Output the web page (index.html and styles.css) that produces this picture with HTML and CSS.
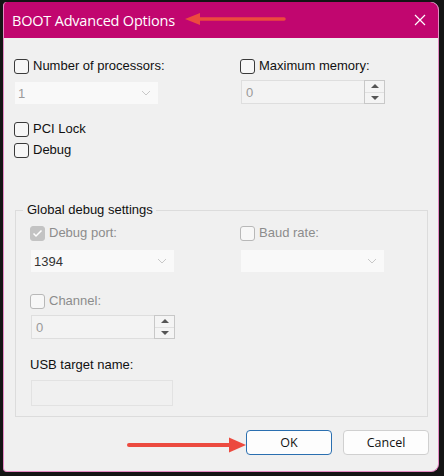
FILE: index.html
```html
<!DOCTYPE html>
<html>
<head>
<meta charset="utf-8">
<link rel="stylesheet" href="styles.css">
</head>
<body>
<div class="window">
  <div class="titlebar">
    <span class="title">BOOT Advanced Options</span>
    <svg class="close" width="12" height="12" viewBox="0 0 12 12"><path d="M1 1L11 11M11 1L1 11" stroke="#fff" stroke-width="1.2" fill="none"/></svg>
    <svg class="arrow arrow-title" width="104" height="16" viewBox="0 0 104 16"><path d="M14 8H100" stroke="#ec4a3f" stroke-width="3.5" stroke-linecap="round"/><path d="M1 8L16 2L16 14Z" fill="#ec4a3f"/></svg>
  </div>
  <div class="content">
    <div class="cols top">
      <div class="col">
        <label class="check"><span class="box"></span>Number of processors:</label>
        <div class="combo disabled"><span class="val">1</span><svg class="chev" width="10" height="6" viewBox="0 0 10 6"><path d="M1 1L5 5L9 1" stroke="#c8c8c8" fill="none"/></svg></div>
        <label class="check pci"><span class="box"></span>PCI Lock</label>
        <label class="check dbg"><span class="box"></span>Debug</label>
      </div>
      <div class="col">
        <label class="check"><span class="box"></span>Maximum memory:</label>
        <div class="spin mem"><span class="val">0</span><div class="spinbtns"><span class="up"></span><span class="down"></span></div></div>
      </div>
    </div>
    <fieldset class="group">
      <legend>Global debug settings</legend>
      <div class="cols">
        <div class="col">
          <label class="check off"><span class="box checked"><svg width="11" height="9" viewBox="0 0 11 9"><path d="M1.5 4.5L4 7L9.5 1.5" stroke="#fff" stroke-width="1.5" fill="none"/></svg></span>Debug port:</label>
          <div class="combo"><span class="val dark">1394</span><svg class="chev" width="10" height="6" viewBox="0 0 10 6"><path d="M1 1L5 5L9 1" stroke="#c8c8c8" fill="none"/></svg></div>
          <label class="check off chan"><span class="box"></span>Channel:</label>
          <div class="spin"><span class="val">0</span><div class="spinbtns"><span class="up"></span><span class="down"></span></div></div>
          <div class="label usb">USB target name:</div>
          <div class="textbox"></div>
        </div>
        <div class="col">
          <label class="check off"><span class="box"></span>Baud rate:</label>
          <div class="combo"><span class="val"></span><svg class="chev" width="10" height="6" viewBox="0 0 10 6"><path d="M1 1L5 5L9 1" stroke="#c8c8c8" fill="none"/></svg></div>
        </div>
      </div>
    </fieldset>
    <div class="buttons">
      <button class="btn default">OK</button>
      <button class="btn">Cancel</button>
    </div>
    <svg class="arrow arrow-ok" width="122" height="18" viewBox="0 0 122 18"><path d="M3 9H108" stroke="#ec4a3f" stroke-width="4" stroke-linecap="round"/><path d="M120 9L103 1.5L103 16.5Z" fill="#ec4a3f"/></svg>
  </div>
</div>
</body>
</html>
```

FILE: styles.css
```css
* { box-sizing: border-box; }
html, body { margin: 0; padding: 0; }
body {
  background: #141414;
  width: 444px;
  height: 476px;
  overflow: hidden;
  padding: 2px 5px 4px 3px;
  font-family: "Liberation Sans", Arial, sans-serif;
  font-size: 13px;
  color: #111;
}
.window {
  position: relative;
  width: 436px;
  height: 470px;
  background: #f0f0f0;
  border: 1px solid #e58ac4;
  border-top: none;
  border-radius: 4px 8px 8px 4px;
  display: flex;
  flex-direction: column;
  overflow: hidden;
}
.titlebar {
  position: relative;
  height: 36px;
  background: #c1066f;
  margin: 0 -1px;
  display: flex;
  align-items: center;
  padding: 0 9px;
  border-radius: 3px 9px 0 0;
}
.title {
  color: #fff;
  font-family: "Open Sans", "Noto Sans", sans-serif;
  font-size: 14.5px;
  letter-spacing: -0.2px;
  flex: 1;
}
.close { margin-right: 4px; }
.arrow { position: absolute; }
.arrow-title { left: 181px; top: 9px; }
.arrow-ok { left: 122px; top: 398px; }
.content {
  position: relative;
  flex: 1;
  padding: 20px 9px 0 10px;
  display: flex;
  flex-direction: column;
}
.cols { display: flex; }
.col { display: flex; flex-direction: column; align-items: flex-start; }
.col:first-child { width: 226px; }
.group .col:first-child { width: 210px; }
.check {
  display: flex;
  align-items: center;
  height: 16px;
  gap: 4px;
  line-height: 16px;
}
.check.off { color: #8c8c8c; }
.box {
  width: 15px;
  height: 15px;
  border: 1px solid #3a3a3a;
  border-radius: 3px;
  background: #f7f7f7;
  display: flex;
  align-items: center;
  justify-content: center;
}
.off .box { border-color: #b8b8b8; }
.box.checked { background: #c3c3c3; border-color: #c3c3c3; }
.combo {
  margin-top: 8px;
  margin-left: 1px;
  width: 143px;
  height: 22px;
  background: #f9f9f9;
  display: flex;
  align-items: center;
  justify-content: space-between;
  padding: 0 7px 0 3px;
}
.group .combo { margin-top: 9px; }
.val { color: #9a9a9a; }
.val.dark { color: #333; }
.pci { margin-top: 17px; }
.dbg { margin-top: 5px; }
.spin {
  margin-left: 1px;
  width: 144px;
  height: 24px;
  border: 1px solid #dedede;
  background: #f3f3f3;
  display: flex;
  align-items: center;
  justify-content: space-between;
  padding-left: 4px;
}
.spin.mem { margin-top: 6px; }
.spinbtns {
  width: 21px;
  height: 24px;
  margin: -1px -1px -1px 0;
  border: 1px solid #c8c8c8;
  display: flex;
  flex-direction: column;
  background: #f4f4f4;
}
.spinbtns span {
  flex: 1;
  display: flex;
  align-items: center;
  justify-content: center;
}
.spinbtns .up { border-bottom: 1px solid #e0e0e0; }
.spinbtns .up::before {
  content: "";
  border-left: 4px solid transparent;
  border-right: 4px solid transparent;
  border-bottom: 4px solid #555;
}
.spinbtns .down::before {
  content: "";
  border-left: 4px solid transparent;
  border-right: 4px solid transparent;
  border-top: 4px solid #555;
}
.group {
  margin: 45px 0 0 1px;
  width: 413px;
  border: 1px solid #dcdcdc;
  padding: 8px 0 10px 14px;
  min-width: 0;
}
.group legend {
  padding: 0 3px 0 4px;
  margin-left: -7px;
  line-height: 14px;
}
.chan { margin-top: 21px; }
.chan + .spin { margin-top: 6px; }
.label.usb { margin-top: 18px; line-height: 16px; height: 16px; }
.textbox {
  margin-top: 7px;
  margin-left: 1px;
  width: 142px;
  height: 26px;
  border: 1px solid #e2e2e2;
  background: #f0f0f0;
}
.buttons {
  margin-top: 13px;
  display: flex;
  justify-content: flex-end;
  gap: 11px;
}
.btn {
  width: 86px;
  height: 25px;
  font-family: "Open Sans", "Noto Sans", sans-serif;
  font-size: 12.5px;
  color: #111;
  background: #fdfdfd;
  border: 1px solid #d0d0d0;
  border-radius: 4px;
  padding: 0;
}
.btn.default { border-color: #2a6fb0; }
```
